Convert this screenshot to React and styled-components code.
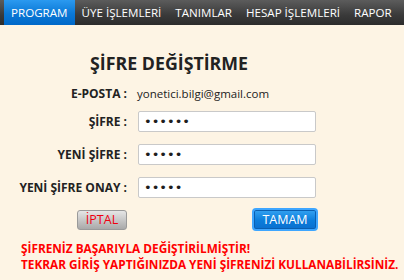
import React from "react";
import styled, { createGlobalStyle } from "styled-components";

const Global = createGlobalStyle`
  html, body { margin: 0; padding: 0; background: #fdf4e4; }
  body { font-family: "Open Sans", "Noto Sans", sans-serif; width: 404px; height: 280px; overflow: hidden; }
  * { box-sizing: border-box; }
`;

const Page = styled.div`
  width: 404px;
  height: 280px;
  background: #fdf4e4;
`;

const MenuBar = styled.nav`
  display: flex;
  height: 25px;
  padding-left: 4px;
  background: linear-gradient(#5c5c5c, #3a3a3a 60%, #2c2c2c);
`;

const MenuItem = styled.div`
  height: 25px;
  line-height: 25px;
  padding: 0 ${(p) => p.$pad}px;
  font-size: 11.6px;
  color: #ffffff;
  white-space: nowrap;
  background: ${(p) => (p.$active ? "linear-gradient(#2b9af0, #0a78d6 55%, #0068c8)" : "transparent")};
`;

const Content = styled.main`
  display: flex;
  flex-direction: column;
  padding-top: 26px;
`;

const Title = styled.h1`
  margin: 0 0 0 90px;
  font-size: 17.8px;
  line-height: 24px;
  font-weight: 700;
  color: #222;
  white-space: nowrap;
`;

const Form = styled.div`
  display: flex;
  flex-direction: column;
  margin-top: 8px;
`;

const Row = styled.div`
  display: grid;
  grid-template-columns: 127px 178px;
  column-gap: ${(p) => p.$gap}px;
  align-items: center;
  height: ${(p) => p.$h}px;
  margin-top: ${(p) => p.$mt}px;
`;

const Label = styled.label`
  text-align: right;
  font-size: 12px;
  font-weight: 700;
  color: #222;
  white-space: nowrap;
`;

const Value = styled.span`
  font-size: 11.5px;
  color: #222;
  white-space: nowrap;
`;

const Field = styled.input`
  width: 178px;
  height: 21px;
  margin: 0;
  padding: 0 5px;
  border: 1px solid #c9c9c9;
  border-radius: 2px;
  background: #fff;
  color: #1e1e1e;
  font-family: "DejaVu Sans", sans-serif;
  font-size: 13px;
  letter-spacing: 0px;
  outline: none;
`;

const Buttons = styled.div`
  display: flex;
  align-items: center;
  height: 23px;
  margin-top: 10px;
  padding-left: 77px;
`;

const Button = styled.button`
  margin: 0;
  padding: 0;
  font-family: "Open Sans", "Noto Sans", sans-serif;
  font-size: 12.5px;
  cursor: pointer;
  ${(p) =>
    p.$primary
      ? `
    width: 66px; height: 23px; margin-left: 125px;
    color: #fff;
    border: 2px solid #3ea6ff;
    border-radius: 4px;
    background: linear-gradient(#35a3f2, #0b7ddb 55%, #0a6fcf);
    box-shadow: inset 0 0 0 1px #0a5fb0;
  `
      : `
    width: 50px; height: 20px;
    color: #f00010;
    border: 1px solid #9a9a9a;
    border-radius: 3px;
    background: linear-gradient(#e6e6e6, #c4c4c4 55%, #a9a9a9);
  `}
`;

const Messages = styled.div`
  margin: 9px 0 0 21px;
  font-size: 11.8px;
  line-height: 16px;
  font-weight: 700;
  color: #ff0000;
  white-space: nowrap;
`;

const menu = [
  { label: "PROGRAM", active: true, pad: 7 },
  { label: "ÜYE İŞLEMLERİ", pad: 7 },
  { label: "TANIMLAR", pad: 7 },
  { label: "HESAP İŞLEMLERİ", pad: 7 },
  { label: "RAPOR", pad: 7 },
];

export default function App() {
  return (
    <Page>
      <Global />
      <MenuBar>
        {menu.map((m) => (
          <MenuItem key={m.label} $active={m.active} $pad={m.pad}>
            {m.label}
          </MenuItem>
        ))}
      </MenuBar>
      <Content>
        <Title>ŞİFRE DEĞİŞTİRME</Title>
        <Form>
          <Row $h={20} $mt={0} $gap={10}>
            <Label>E-POSTA :</Label>
            <Value>yonetici.bilgi@gmail.com</Value>
          </Row>
          <Row $h={21} $mt={8} $gap={11}>
            <Label>ŞİFRE :</Label>
            <Field type="password" defaultValue="123456" readOnly />
          </Row>
          <Row $h={21} $mt={12} $gap={11}>
            <Label>YENİ ŞİFRE :</Label>
            <Field type="password" defaultValue="12345" readOnly />
          </Row>
          <Row $h={21} $mt={12} $gap={11}>
            <Label>YENİ ŞİFRE ONAY :</Label>
            <Field type="password" defaultValue="12345" readOnly />
          </Row>
        </Form>
        <Buttons>
          <Button>İPTAL</Button>
          <Button $primary>TAMAM</Button>
        </Buttons>
        <Messages>
          ŞİFRENİZ BAŞARIYLA DEĞİŞTİRİLMİŞTİR!
          <br />
          TEKRAR GİRİŞ YAPTIĞINIZDA YENİ ŞİFRENİZİ KULLANABİLİRSİNİZ.
        </Messages>
      </Content>
    </Page>
  );
}
